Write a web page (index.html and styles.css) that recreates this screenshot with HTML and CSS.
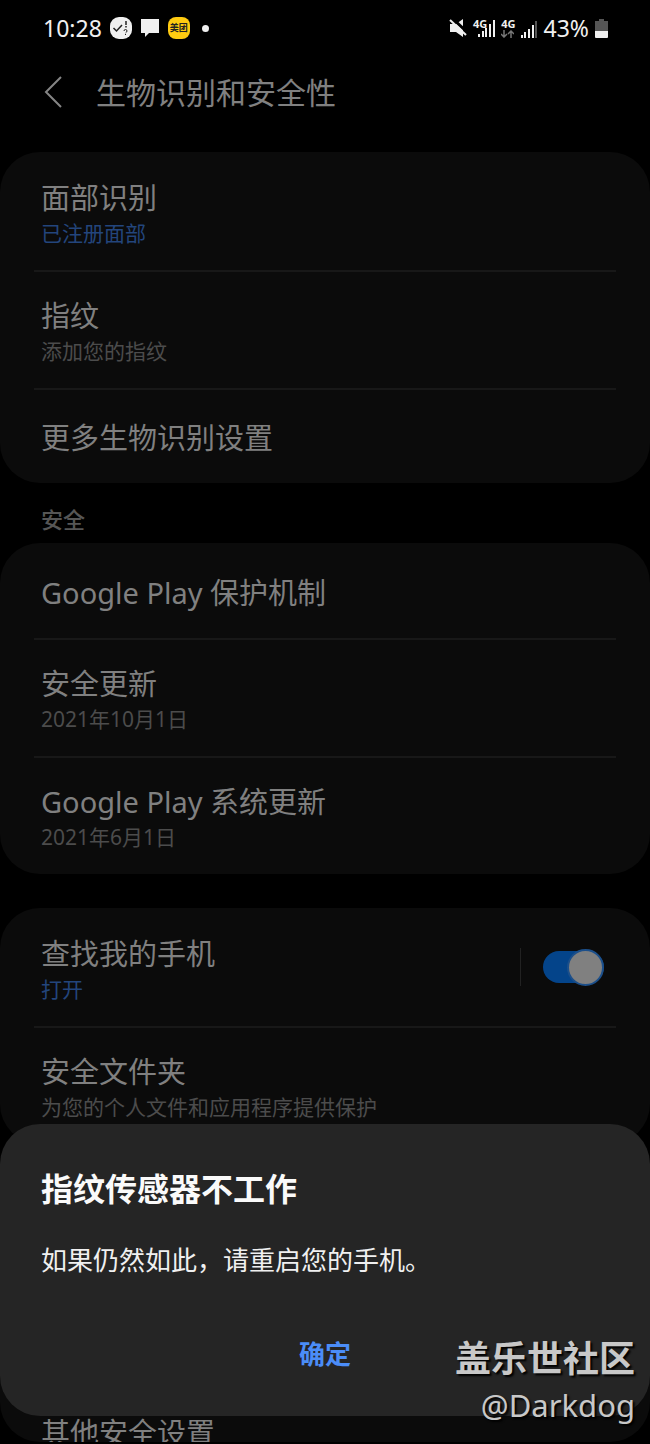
FILE: index.html
```html
<!DOCTYPE html>
<html lang="zh-CN">

<head>
    <meta charset="UTF-8">
    <meta name="viewport" content="width=device-width, initial-scale=1.0">
    <title>生物识别和安全性</title>
    <link rel="stylesheet" href="styles.css">
</head>

<body>
    <div class="screen">
        <!-- 状态栏 -->
        <div class="status">
            <div class="status-left">
                <span class="time">10:28</span>
                <svg width="22" height="22" viewBox="0 0 22 22">
                    <rect width="22" height="22" rx="9" fill="#f0f0f0" />
                    <path d="M3.500 11l3 3 5.500-6" fill="none" stroke="#222" stroke-width="1.500" />
                    <path d="M16 4v4M16 9v1.500" stroke="#222" stroke-width="1.500" />
                    <path d="M14 14q0-1.500 1.500-1.500t1.500 1.500q0 1-1.500 2M15.500 17v1" fill="none" stroke="#222" stroke-width="1" />
                </svg>
                <svg width="20" height="20" viewBox="0 0 20 20">
                    <path d="M1 1h18v14H9l-4 4v-4H1z" fill="#f0f0f0" />
                </svg>
                <span class="badge">美团</span>
                <span class="dot"></span>
            </div>
            <div class="status-right">
                <svg width="18" height="20" viewBox="0 0 18 20">
                    <path d="M1 6h6l7-5v18l-7-5H1z" fill="#f0f0f0" />
                    <path d="M3 0l16 15" stroke="#000" stroke-width="3" />
                    <path d="M1 2l16 15" stroke="#f0f0f0" stroke-width="2" />
                </svg>
                <span class="net">
                    <span class="net-name">4G</span>
                    <svg width="18" height="18" viewBox="0 0 18 18">
                        <path d="M2 15v3M6 12v6M9 9v9M13 5v13M17 1v17" stroke="#f0f0f0" stroke-width="2" />
                    </svg>
                </span>
                <span class="net net-two">
                    <span class="net-col">
                        <span class="net-name">4G</span>
                        <svg width="13" height="8" viewBox="0 0 13 8">
                            <path d="M3 0v7M0 4l3 3 3-3M10 8V1M7 4l3-3 3 3" fill="none" stroke="#777" stroke-width="1.500" />
                        </svg>
                    </span>
                    <svg width="18" height="18" viewBox="0 0 18 18">
                        <path d="M2 15v3M5 12v6M9 9v9M13 5v13" stroke="#f0f0f0" stroke-width="2" />
                        <path d="M16 1v17" stroke="#555" stroke-width="2" />
                    </svg>
                </span>
                <span class="percent">43%</span>
                <svg width="13" height="19" viewBox="0 0 13 19">
                    <path d="M4 0h5v2h4v10H0V2h4z" fill="#555" />
                    <path d="M0 12h13v6q0 1-1 1H1q-1 0-1-1z" fill="#f0f0f0" />
                </svg>
            </div>
        </div>

        <!-- 标题 -->
        <header class="header">
            <button class="back" aria-label="返回">
                <svg width="20" height="32" viewBox="0 0 20 32">
                    <path d="M18 1L3 16l15 15" fill="none" stroke="#858585" stroke-width="2" />
                </svg>
            </button>
            <h1>生物识别和安全性</h1>
        </header>

        <!-- 设置列表 -->
        <main class="list">
            <section class="card">
                <a class="row" href="#">
                    <span class="name">面部识别</span>
                    <span class="sub blue">已注册面部</span>
                </a>
                <a class="row" href="#">
                    <span class="name">指纹</span>
                    <span class="sub">添加您的指纹</span>
                </a>
                <a class="row single" href="#">
                    <span class="name">更多生物识别设置</span>
                </a>
            </section>

            <h2 class="group">安全</h2>
            <section class="card">
                <a class="row single" href="#">
                    <span class="name">Google Play 保护机制</span>
                </a>
                <a class="row" href="#">
                    <span class="name">安全更新</span>
                    <span class="sub">2021年10月1日</span>
                </a>
                <a class="row" href="#">
                    <span class="name">Google Play 系统更新</span>
                    <span class="sub">2021年6月1日</span>
                </a>
            </section>

            <section class="card card-gap">
                <div class="row row-switch">
                    <label class="text" for="find">
                        <span class="name">查找我的手机</span>
                        <span class="sub blue">打开</span>
                    </label>
                    <span class="line"></span>
                    <input class="switch" type="checkbox" id="find" checked>
                </div>
                <a class="row" href="#">
                    <span class="name">安全文件夹</span>
                    <span class="sub">为您的个人文件和应用程序提供保护</span>
                </a>
            </section>

            <section class="card card-gap card-last">
                <a class="row single" href="#">
                    <span class="name">其他安全设置</span>
                </a>
            </section>
        </main>

        <!-- 弹窗 -->
        <div class="dialog" role="dialog" aria-labelledby="dialog-title">
            <h2 id="dialog-title">指纹传感器不工作</h2>
            <p>如果仍然如此，请重启您的手机。</p>
            <button class="ok">确定</button>
        </div>

        <!-- 水印 -->
        <div class="mark">
            <div class="mark-name">盖乐世社区</div>
            <div class="mark-user">@Darkdog</div>
        </div>
    </div>
</body>

</html>
```
FILE: styles.css
```css
*,
*::before {
    box-sizing: border-box;
}

body {
    margin: 0;
    background: #000;
    color: #808080;
    font-family: "Noto Sans", "Noto Sans CJK SC", sans-serif;
}

h1,
h2,
p {
    margin: 0;
}

a {
    color: inherit;
    text-decoration: none;
}

button {
    padding: 0;
    border: none;
    background: none;
    font-family: inherit;
}

svg {
    display: block;
}

.screen {
    position: relative;
    display: flex;
    flex-direction: column;
    height: 100vh;
    overflow: hidden;
}

/* 状态栏 */
.status {
    display: flex;
    flex-shrink: 0;
    justify-content: space-between;
    height: 56px;
    padding: 0 42px 0 43px;
    color: #f0f0f0;
}

.status-left,
.status-right {
    display: flex;
    align-items: center;
}

.status-left {
    gap: 8px;
}

.status-right {
    gap: 6px;
}

.time,
.percent {
    font-size: 23px;
    line-height: 32px;
}

.badge {
    width: 22px;
    height: 22px;
    border-radius: 8px;
    background: #fc1;
    color: #222;
    font-size: 9px;
    font-weight: bold;
    line-height: 22px;
    text-align: center;
}

.dot {
    width: 7px;
    height: 7px;
    margin-left: 4px;
    border-radius: 50%;
    background: #f0f0f0;
}

.net {
    display: flex;
    align-items: flex-end;
}

.net-name {
    align-self: flex-start;
    margin-right: -10px;
    font-size: 11px;
    font-weight: bold;
    line-height: 10px;
}

.net-two {
    gap: 4px;
}

.net-col {
    display: flex;
    flex-direction: column;
    gap: 1px;
}

.net-col .net-name {
    margin-right: 0;
}

/* 标题 */
.header {
    display: flex;
    flex-shrink: 0;
    align-items: center;
    height: 72px;
    margin-bottom: 24px;
    padding: 0 43px;
}

.back {
    margin-right: 33px;
}

.header h1 {
    padding-top: 2px;
    font-size: 30px;
    font-weight: normal;
    line-height: 40px;
}

/* 列表 */
.list {
    flex: 1;
    min-height: 0;
    margin-bottom: 2px;
    border-radius: 0 0 40px 40px;
    overflow: hidden;
}

.card {
    padding: 0 34px;
    border-radius: 40px;
    background: #0b0b0b;
}

.card-gap {
    margin-top: 34px;
}

.card-last {
    padding-top: 205px;
}

.row {
    display: flex;
    flex-direction: column;
    height: 118px;
    padding: 24px 7px 0;
    border-top: 2px solid #181818;
}

.row:first-child {
    border-top-color: transparent;
}

.single {
    height: 95px;
    padding-top: 28px;
}

.name {
    font-size: 29px;
    line-height: 40px;
}

.sub {
    margin-top: -1px;
    color: #4c4c4c;
    font-size: 21px;
    line-height: 32px;
}

.blue {
    color: #23457c;
}

.group {
    height: 60px;
    padding: 20px 41px 0;
    color: #565656;
    font-size: 22px;
    font-weight: 500;
    line-height: 32px;
}

.row-switch {
    flex-direction: row;
    padding-right: 12px;
}

.text {
    display: flex;
    flex: 1;
    flex-direction: column;
}

.line {
    width: 1px;
    height: 38px;
    margin: 14px 22px 0 0;
    background: #222;
}

.switch {
    display: flex;
    align-items: center;
    justify-content: flex-end;
    width: 61px;
    height: 32px;
    margin: 17px 0 0;
    border-radius: 16px;
    background: #04448a;
    appearance: none;
}

.switch::before {
    content: "";
    flex-shrink: 0;
    width: 37px;
    height: 37px;
    border: 2px solid #1c4f8a;
    border-radius: 50%;
    background: #808080;
}

/* 弹窗 */
.dialog {
    position: absolute;
    right: 0;
    bottom: 28px;
    left: 0;
    padding: 43px 41px 40px;
    border-radius: 40px;
    background: #252525;
    color: #f0f0f0;
}

.dialog h2 {
    color: #fafafa;
    font-size: 32px;
    font-weight: bold;
    line-height: 44px;
}

.dialog p {
    margin: 30px 0 53px;
    font-size: 26px;
    line-height: 38px;
}

.ok {
    display: block;
    width: 100%;
    color: #4b8df8;
    font-size: 26px;
    font-weight: bold;
    line-height: 44px;
}

/* 水印 */
.mark {
    position: absolute;
    right: 15px;
    bottom: 17px;
    color: #c8c8c8;
    text-align: right;
    text-shadow: 2px 2px 2px #000;
}

.mark-name {
    font-size: 36px;
    font-weight: bold;
    line-height: 48px;
}

.mark-user {
    font-size: 31px;
    line-height: 44px;
}
```
